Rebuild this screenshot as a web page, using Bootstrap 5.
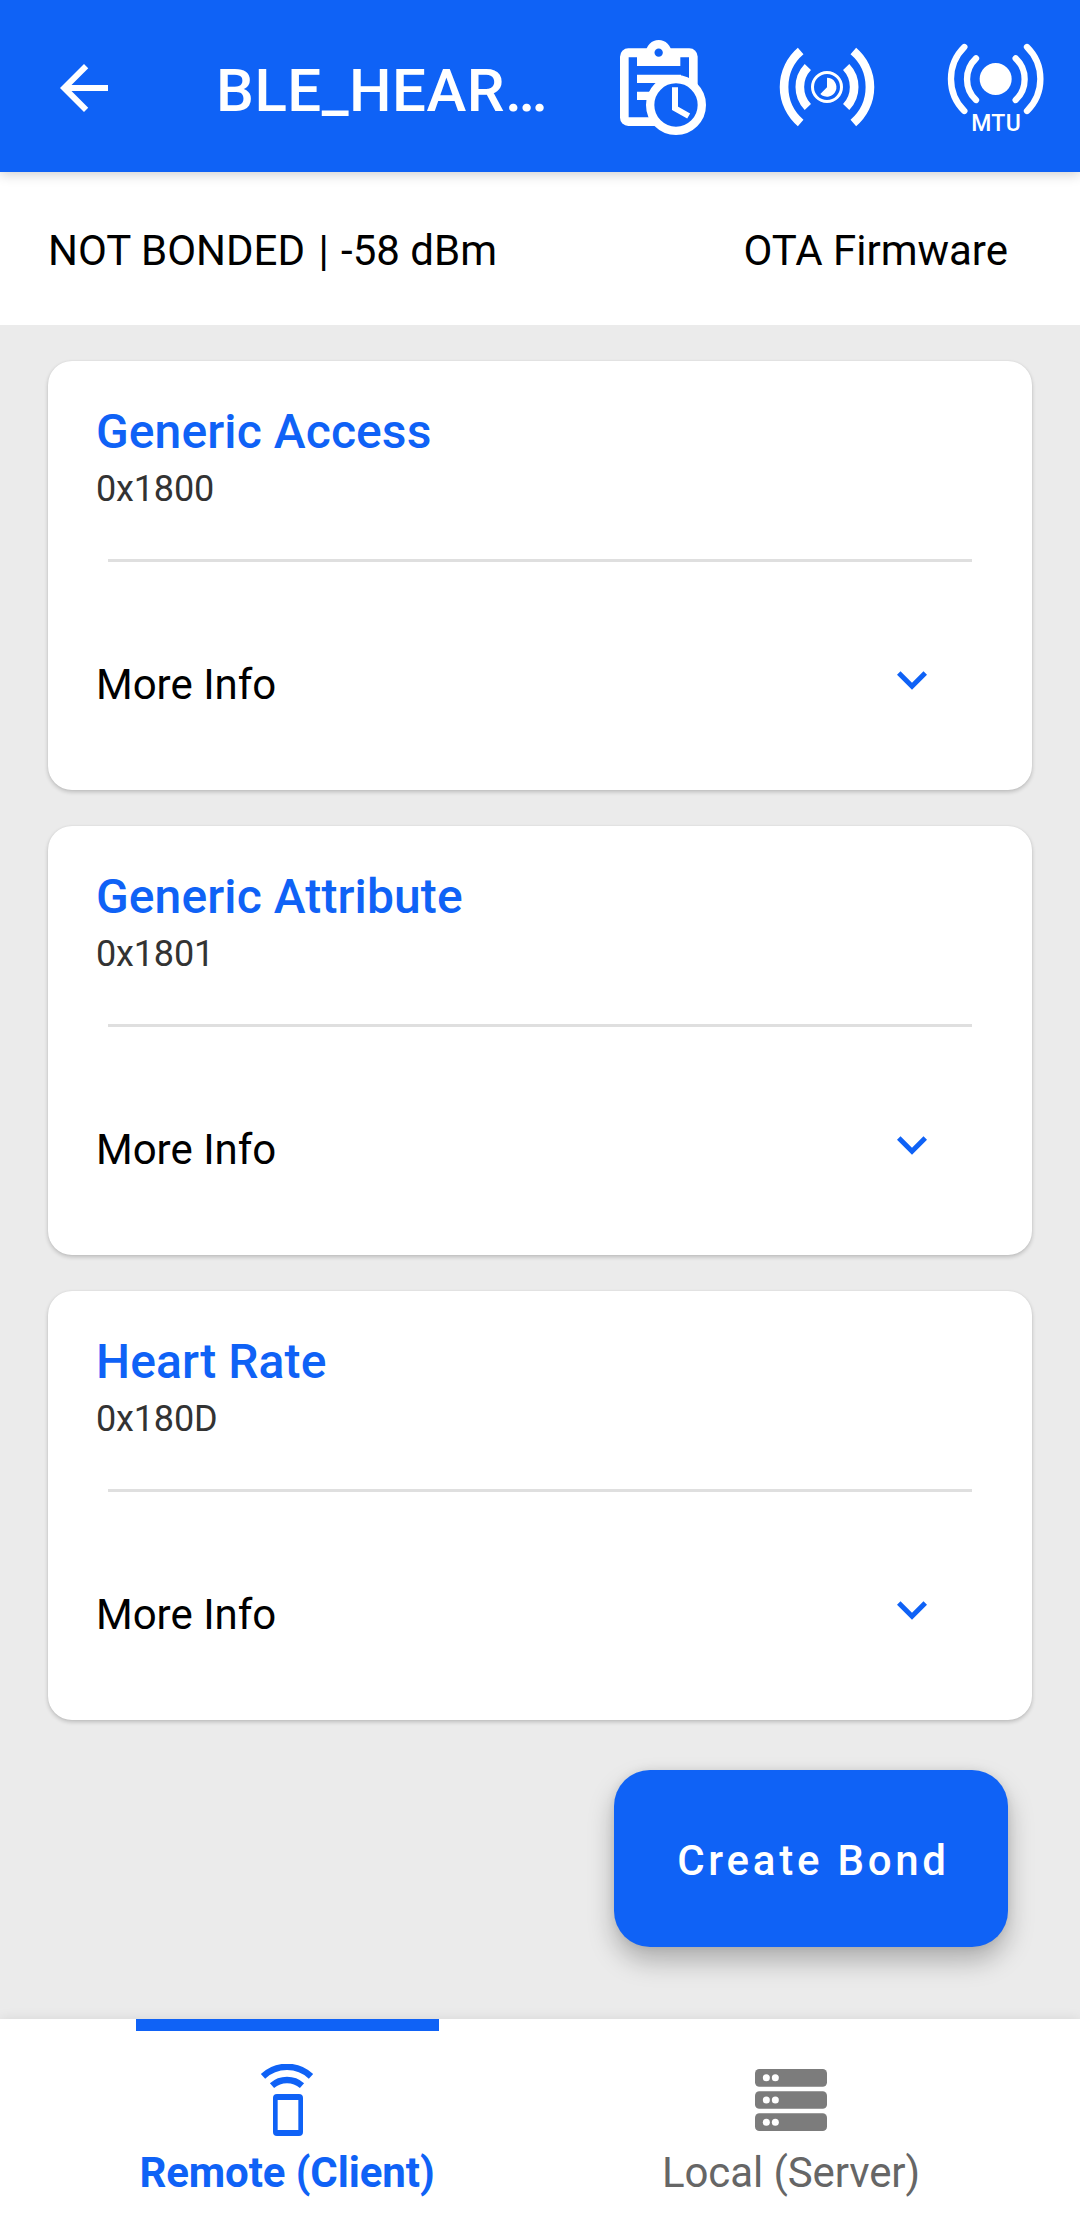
<!DOCTYPE html>
<html lang="en">
<head>
<meta charset="utf-8">
<meta name="viewport" content="width=device-width, initial-scale=1">
<title>BLE device services</title>
<link rel="stylesheet" href="https://cdn.jsdelivr.net/npm/bootstrap@5.3.0/dist/css/bootstrap.min.css">
<style>
  :root { --brand: #0f62f6; }
  body { font-family: Roboto, sans-serif; font-size: 42px; line-height: 50px; color: #000; background: #ebebeb; }
  svg { display: block; flex: none; }
  .app-screen { height: 2231px; overflow: hidden; }
  .app-bar { height: 172px; padding: 0 32px 0 48px; background: var(--brand); color: #fff; box-shadow: 0 2px 12px rgba(0,0,0,.2); z-index: 2; }
  .ic-back { margin-top: 4px; }
  .app-title { width: 336px; margin: 10px 0 0 96px; font-size: 60px; line-height: 72px; font-weight: 500; letter-spacing: .5px; }
  .ic-log { margin: 4px 0 0 64px; }
  .ic-interval { margin: 2px 0 0 65px; }
  .ic-mtu { margin: 4px 0 0 67px; }
  .status-bar { height: 153px; padding: 4px 72px 0 48px; background: #fff; }
  .status-sep { margin: 0 2px 0 3px; }
  .service-list { padding: 36px 48px 0; gap: 36px; }
  .service-card { height: 429px; border: 0; border-radius: 24px; padding: 43px 48px 0; box-shadow: 0 2px 4px rgba(0,0,0,.2), 0 0 2px rgba(0,0,0,.06); }
  .service-name { font-size: 48px; line-height: 56px; font-weight: 500; letter-spacing: .1px; color: var(--brand); margin: 0 0 8px; }
  .service-id { font-size: 36px; line-height: 42px; letter-spacing: -.15px; color: #333; }
  .rule { height: 3px; margin: 49px 12px 0; background: #dfdfdf; }
  .more-row { margin-top: 98px; padding-right: 57px; }
  .more-row svg { margin-bottom: 9px; }
  .bond-btn { --bs-btn-color: #fff; --bs-btn-bg: var(--brand); --bs-btn-hover-bg: #0b54d6; --bs-btn-hover-color: #fff; width: 394px; height: 177px; margin: 50px 72px 0 0; padding: 4px 0 0 5px; border: 0; border-radius: 36px; font-size: 42px; line-height: 50px; font-weight: 500; letter-spacing: 3.75px; box-shadow: 0 14px 26px rgba(0,0,0,.26), 0 0 10px rgba(0,0,0,.08); }
  .tab-bar { height: 212px; padding: 0 37px 0 35px; background: #fff; box-shadow: 0 0 12px rgba(0,0,0,.09); }
  .tab-item { color: #666; }
  .tab-item.active { color: var(--brand); font-weight: 700; }
  .tab-line { width: 303px; height: 12px; margin-bottom: 33px; }
  .active .tab-line { background: var(--brand); }
  .tab-label { margin-top: 12px; letter-spacing: -.1px; }
</style>
</head>
<body>
<div class="app-screen d-flex flex-column">
  <header class="app-bar d-flex align-items-center position-relative flex-shrink-0">
    <svg class="ic-back" width="72" height="72" viewBox="0 0 24 24" fill="#fff"><path d="M20 11H7.83l5.59-5.59L12 4l-8 8 8 8 1.41-1.41L7.83 13H20z"/></svg>
    <h1 class="app-title text-nowrap">BLE_HEAR…</h1>
    <svg class="ic-log" width="96" height="104" viewBox="48 48 288 312">
      <rect x="60" y="85" width="233" height="233" rx="25" fill="#fff"/>
      <path d="M86 112h25v26h130v-26h26v180H86z" fill="var(--brand)"/>
      <path d="M111 164h132v25H111zM111 215h50v25h-50z" fill="#fff"/>
      <circle cx="176" cy="98" r="38" fill="#fff"/>
      <circle cx="176" cy="98" r="12.5" fill="var(--brand)"/>
      <circle cx="228" cy="255" r="77.5" fill="var(--brand)" stroke="#fff" stroke-width="25"/>
      <path d="M225 202v63l41 23" fill="none" stroke="#fff" stroke-width="18"/>
    </svg>
    <svg class="ic-interval" width="100" height="84" viewBox="532 75 300 252" fill="none" stroke="#fff">
      <path stroke-width="26" d="M603 93A142 142 0 0 0 603 309M761 93A142 142 0 0 1 761 309M624.5 141A87 87 0 0 0 624.5 261M739.5 141A87 87 0 0 1 739.5 261"/>
      <circle cx="682" cy="201" r="43.5" stroke-width="9"/>
      <path d="M682 173a28.5 28.5 0 1 1-20 49l20-20z" fill="#fff" stroke="none"/>
    </svg>
    <svg class="ic-mtu" width="104" height="96" viewBox="312 60 312 288" fill="none" stroke="#fff" stroke-linecap="round">
      <path stroke-width="19" d="M373 81A135 135 0 0 0 373 273M561 81A135 135 0 0 1 561 273M408 115A86 86 0 0 0 408 240M527 115A86 86 0 0 1 527 240"/>
      <circle cx="467" cy="177" r="48" fill="#fff" stroke="none"/>
      <text x="468" y="332" text-anchor="middle" textLength="149" font-family="Roboto" font-weight="500" font-size="69" fill="#fff" stroke="none">MTU</text>
    </svg>
  </header>

  <section class="status-bar d-flex justify-content-between align-items-center flex-shrink-0">
    <span>NOT BONDED <span class="status-sep">|</span> -58 dBm</span>
    <span>OTA Firmware</span>
  </section>

  <main class="flex-grow-1">
    <div class="service-list d-flex flex-column">
      <article class="card service-card">
        <h2 class="service-name">Generic Access</h2>
        <div class="service-id">0x1800</div>
        <div class="rule"></div>
        <div class="more-row d-flex justify-content-between align-items-center">
          <span>More Info</span>
          <svg width="30" height="19" viewBox="6 8.59 12 7.41" fill="var(--brand)"><path d="M16.59 8.59 12 13.17 7.41 8.59 6 10l6 6 6-6z"/></svg>
        </div>
      </article>
      <article class="card service-card">
        <h2 class="service-name">Generic Attribute</h2>
        <div class="service-id">0x1801</div>
        <div class="rule"></div>
        <div class="more-row d-flex justify-content-between align-items-center">
          <span>More Info</span>
          <svg width="30" height="19" viewBox="6 8.59 12 7.41" fill="var(--brand)"><path d="M16.59 8.59 12 13.17 7.41 8.59 6 10l6 6 6-6z"/></svg>
        </div>
      </article>
      <article class="card service-card">
        <h2 class="service-name">Heart Rate</h2>
        <div class="service-id">0x180D</div>
        <div class="rule"></div>
        <div class="more-row d-flex justify-content-between align-items-center">
          <span>More Info</span>
          <svg width="30" height="19" viewBox="6 8.59 12 7.41" fill="var(--brand)"><path d="M16.59 8.59 12 13.17 7.41 8.59 6 10l6 6 6-6z"/></svg>
        </div>
      </article>
    </div>
    <div class="d-flex justify-content-end">
      <button type="button" class="btn bond-btn">Create Bond</button>
    </div>
  </main>

  <nav class="tab-bar d-flex flex-shrink-0">
    <a class="tab-item active w-50 d-flex flex-column align-items-center text-decoration-none" href="#">
      <span class="tab-line"></span>
      <svg width="72" height="72" viewBox="393 192 216 216" fill="none" stroke="currentColor">
        <path stroke-width="19" stroke-linejoin="round" d="M429 229A105 105 0 0 1 573 229M456 257A68 68 0 0 1 546 257"/>
        <path fill="currentColor" stroke="none" fill-rule="evenodd" d="M471 282h66a12 12 0 0 1 12 12v102a12 12 0 0 1-12 12h-66a12 12 0 0 1-12-12V294a12 12 0 0 1 12-12zM473 300v90h62v-90z"/>
      </svg>
      <span class="tab-label">Remote (Client)</span>
    </a>
    <a class="tab-item w-50 d-flex flex-column align-items-center text-decoration-none" href="#">
      <span class="tab-line"></span>
      <svg width="72" height="72" viewBox="348 192 216 216" fill="#7c7c7c">
        <rect x="348" y="207" width="216" height="53" rx="13"/>
        <rect x="348" y="273.500" width="216" height="53" rx="13"/>
        <rect x="348" y="340" width="216" height="53" rx="13"/>
        <g fill="#fff"><circle cx="382" cy="233" r="10.500"/><circle cx="409" cy="233" r="10.500"/><circle cx="382" cy="300" r="10.500"/><circle cx="409" cy="300" r="10.500"/><circle cx="382" cy="367" r="10.500"/><circle cx="409" cy="367" r="10.500"/></g>
      </svg>
      <span class="tab-label">Local (Server)</span>
    </a>
  </nav>
</div>
<script src="https://cdn.jsdelivr.net/npm/bootstrap@5.3.0/dist/js/bootstrap.bundle.min.js"></script>
</body>
</html>
